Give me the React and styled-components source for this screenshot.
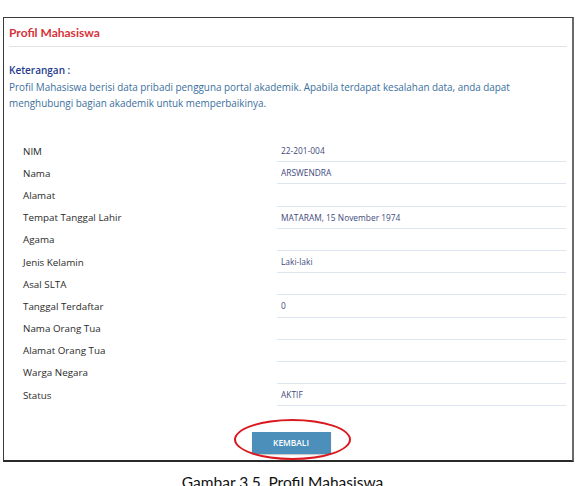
import React from "react";
import styled, { createGlobalStyle } from "styled-components";

const GlobalStyle = createGlobalStyle`
  html, body {
    margin: 0;
    padding: 0;
    background: #ffffff;
  }
  body {
    font-family: "Open Sans", "Noto Sans", sans-serif;
  }
`;

const rows = [
  ["NIM", "22-201-004"],
  ["Nama", "ARSWENDRA"],
  ["Alamat", ""],
  ["Tempat Tanggal Lahir", "MATARAM, 15 November 1974"],
  ["Agama", ""],
  ["Jenis Kelamin", "Laki-laki"],
  ["Asal SLTA", ""],
  ["Tanggal Terdaftar", "0"],
  ["Nama Orang Tua", ""],
  ["Alamat Orang Tua", ""],
  ["Warga Negara", ""],
  ["Status", "AKTIF"],
];

const App = () => {
  return (
    <Page>
      <GlobalStyle />
      <Frame>
        <Header>Profil Mahasiswa</Header>
        <Note>
          <NoteTitle>Keterangan :</NoteTitle>
          <NoteText>
            Profil Mahasiswa berisi data pribadi pengguna portal akademik. Apabila terdapat
            kesalahan data, anda dapat menghubungi bagian akademik untuk memperbaikinya.
          </NoteText>
        </Note>
        <Table>
          {rows.map(([label, value]) => (
            <Row key={label}>
              <Label>{label}</Label>
              <Value>{value}</Value>
            </Row>
          ))}
        </Table>
        <Actions>
          <ButtonWrap>
            <Button>KEMBALI</Button>
            <Circle />
          </ButtonWrap>
        </Actions>
      </Frame>
      <Caption>Gambar 3.5. Profil Mahasiswa</Caption>
    </Page>
  );
};

const Page = styled.div`
  width: 579px;
  height: 486px;
  overflow: hidden;
  padding: 17px 5px 0 3px;
  box-sizing: border-box;
`;

const Frame = styled.div`
  box-sizing: border-box;
  width: 571px;
  height: 445px;
  border: 1px solid #3a3a3a;
  border-right: 2px solid #6a6a6a;
  border-bottom: 2px solid #2a2a2a;
  padding: 7px 5px 0 5px;
`;

const Header = styled.div`
  font-family: "Lato", "Open Sans", sans-serif;
  font-size: 12px;
  font-weight: 700;
  line-height: 16px;
  color: #d6333a;
  padding-bottom: 5px;
  border-bottom: 1px solid #e4e4e4;
`;

const Note = styled.div`
  padding-top: 15px;
`;

const NoteTitle = styled.div`
  font-size: 10px;
  line-height: 16px;
  font-weight: 600;
  color: #1f3c8c;
`;

const NoteText = styled.p`
  margin: 1px 0 0;
  max-width: 505px;
  font-size: 9.9px;
  line-height: 16px;
  color: #3b6f9c;
`;

const Table = styled.div`
  margin-top: 29px;
  padding-left: 14px;
`;

const Row = styled.div`
  display: grid;
  grid-template-columns: 254px 289px;
  height: 22.2px;
  align-items: stretch;
`;

const Label = styled.div`
  display: flex;
  align-items: center;
  font-size: 9.8px;
  color: #2b2b2b;
`;

const Value = styled.div`
  display: flex;
  align-items: center;
  padding-left: 4px;
  font-size: 8.4px;
  color: #3f4a7c;
  border-bottom: 1px solid #dce6f0;
`;

const Actions = styled.div`
  display: flex;
  justify-content: center;
  padding-top: 23px;
  padding-left: 6px;
`;

const ButtonWrap = styled.div`
  position: relative;
`;

const Button = styled.button`
  width: 79px;
  height: 22px;
  border: none;
  background: #4b8fba;
  color: #ffffff;
  font-family: "Open Sans", sans-serif;
  font-size: 8.4px;
  font-weight: 600;
  box-shadow: 0 1px 1px rgba(0, 0, 0, 0.2);
`;

const Circle = styled.div`
  position: absolute;
  left: -18px;
  top: -10px;
  width: 113px;
  height: 37px;
  border: 2px solid #d9191f;
  border-radius: 50%;
  pointer-events: none;
`;

const Caption = styled.div`
  text-align: center;
  font-family: "Lato", "Open Sans", sans-serif;
  font-size: 15.5px;
  color: #111;
  padding-top: 11px;
  padding-right: 12px;
`;

export default App;
